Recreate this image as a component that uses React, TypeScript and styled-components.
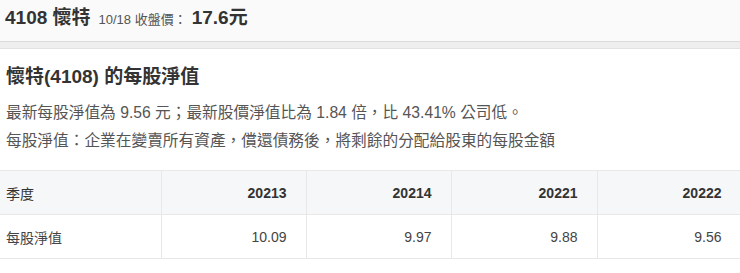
import styled, { createGlobalStyle } from 'styled-components';

const GlobalStyle = createGlobalStyle`
  body {
    margin: 0;
    background: #ffffff;
    font-family: 'Liberation Sans', 'Noto Sans CJK TC', sans-serif;
    color: #333;
    overflow: hidden;
  }
`;

const Page = styled.div`
  width: 740px;
  font-feature-settings: 'locl' 1;
`;

const TopBar = styled.div`
  height: 41px;
  background-color: #fafafa;
  display: flex;
  align-items: baseline;
  padding: 2px 5px 0;
  box-sizing: border-box;
  gap: 8px;
`;

const StockName = styled.span`
  font-size: 19px;
  font-weight: 700;
  color: #333;
`;

const PriceLabel = styled.span`
  font-size: 13px;
  color: #555;
`;

const Price = styled.span`
  font-size: 19px;
  font-weight: 700;
  color: #333;
  margin-left: -3px;
`;

const Strip = styled.div`
  height: 6px;
  background-color: #eeeeee;
  border-top: 1px solid #dcdcdc;
  border-bottom: 1px solid #e2e2e2;
`;

const Content = styled.div`
  padding: 14px 6px 0;
`;

const Title = styled.h2`
  margin: 0 0 8px;
  font-size: 19px;
  font-weight: 700;
  line-height: 28px;
  color: #333;
`;

const Line = styled.p`
  margin: 0;
  font-size: 15.7px;
  line-height: 28px;
  color: #555;
  white-space: nowrap;
`;

const Table = styled.table`
  margin-top: 15px;
  width: 741px;
  border-collapse: collapse;
  table-layout: fixed;
  font-size: 14px;
`;

const Cell = styled.td<{ head?: boolean; label?: boolean }>`
  height: 44px;
  box-sizing: border-box;
  padding: 0 ${(p) => (p.label ? '6px' : '19px')} 0 6px;
  text-align: ${(p) => (p.label ? 'left' : 'right')};
  border: 1px solid #e8e8e8;
  border-left: ${(p) => (p.label ? 'none' : '1px solid #ececec')};
  background-color: ${(p) => (p.head ? '#f6f7f8' : '#ffffff')};
  font-weight: ${(p) => (p.head && !p.label ? 700 : 400)};
  color: ${(p) => (p.head ? '#333' : '#444')};
`;

const quarters = ['20213', '20214', '20221', '20222'];
const values = ['10.09', '9.97', '9.88', '9.56'];

const App = () => {
  return (
    <Page lang="zh-TW">
      <GlobalStyle />
      <TopBar>
        <StockName>4108 懷特</StockName>
        <PriceLabel>10/18 收盤價：</PriceLabel>
        <Price>17.6元</Price>
      </TopBar>
      <Strip />
      <Content>
        <Title>懷特(4108) 的每股淨值</Title>
        <Line>最新每股淨值為 9.56 元；最新股價淨值比為 1.84 倍，比 43.41% 公司低。</Line>
        <Line>每股淨值：企業在變賣所有資產，償還債務後，將剩餘的分配給股東的每股金額</Line>
      </Content>
      <Table>
        <colgroup>
          <col style={{ width: 161 }} />
          <col style={{ width: 145 }} />
          <col style={{ width: 145 }} />
          <col style={{ width: 146 }} />
          <col style={{ width: 144 }} />
        </colgroup>
        <tbody>
          <tr>
            <Cell head label>
              季度
            </Cell>
            {quarters.map((q) => (
              <Cell head key={q}>
                {q}
              </Cell>
            ))}
          </tr>
          <tr>
            <Cell label>每股淨值</Cell>
            {values.map((v, i) => (
              <Cell key={i}>{v}</Cell>
            ))}
          </tr>
        </tbody>
      </Table>
    </Page>
  );
};

export default App;
